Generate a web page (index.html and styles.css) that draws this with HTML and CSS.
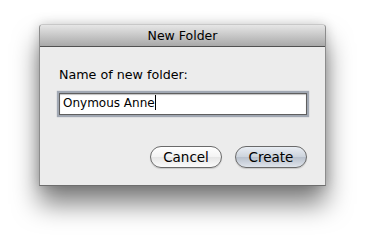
FILE: index.html
```html
<!DOCTYPE html>
<html lang="en">
<head>
    <meta charset="UTF-8">
    <title>New Folder</title>
    <link rel="stylesheet" href="styles.css">
</head>
<body>
    <div class="sheet">
        <div class="titlebar">New Folder</div>
        <div class="content">
            <div class="label">Name of new folder:</div>
            <div class="field">Onymous Anne<span class="caret"></span></div>
            <div class="buttons">
                <button class="btn">Cancel</button>
                <button class="btn default">Create</button>
            </div>
        </div>
    </div>
</body>
</html>
```
FILE: styles.css
```css
html, body {
    min-height: 241px;
}

body {
    margin: 0;
    padding: 24px 0 0 39px;
    box-sizing: border-box;
    background-color: #ffffff;
    font-family: "DejaVu Sans", sans-serif;
    font-size: 12px;
    color: #000;
}

.sheet {
    width: 285px;
    height: 160px;
    border: 1px solid #8c8c8c;
    border-top-color: #c8c8c8;
    border-bottom-color: #6e6e6e;
    border-radius: 4px 4px 0 0;
    background-color: #ececec;
    box-shadow: 0 18px 26px rgba(0, 0, 0, 0.5), 0 0 12px rgba(0, 0, 0, 0.18);
    display: flex;
    flex-direction: column;
}

.titlebar {
    height: 21px;
    line-height: 21px;
    text-align: center;
    font-size: 12.5px;
    background: linear-gradient(#e6e6e6, #a9a9a9);
    border-bottom: 1px solid #515151;
    border-radius: 4px 4px 0 0;
}

.content {
    padding: 20px 18px 0 19px;
}

.label {
    font-size: 12.7px;
    line-height: 15px;
}

.field {
    margin-top: 11px;
    height: 20px;
    line-height: 19px;
    padding-left: 3px;
    background-color: #ffffff;
    border: 1px solid #5f5f5f;
    box-shadow: 0 0 1px 2px #a1a8b3, inset 0 1px 1px rgba(0, 0, 0, 0.25);
}

.caret {
    display: inline-block;
    width: 1px;
    height: 15px;
    background-color: #000;
    vertical-align: -3px;
}

.buttons {
    display: flex;
    justify-content: flex-end;
    gap: 13px;
    margin-top: 31px;
}

.btn {
    width: 72px;
    height: 22px;
    padding: 0;
    font-family: inherit;
    font-size: 13.5px;
    color: #000;
    border: 1px solid #6a6a6a;
    border-radius: 11px;
    background: linear-gradient(#ffffff, #f3f3f3 50%, #e6e6e6 52%, #fbfbfb);
    box-shadow: 0 1px 1px rgba(0, 0, 0, 0.15);
}

.btn.default {
    background: linear-gradient(#e9edf3, #ccd3dc 50%, #b9c1cd 52%, #dfe4eb);
}
```
